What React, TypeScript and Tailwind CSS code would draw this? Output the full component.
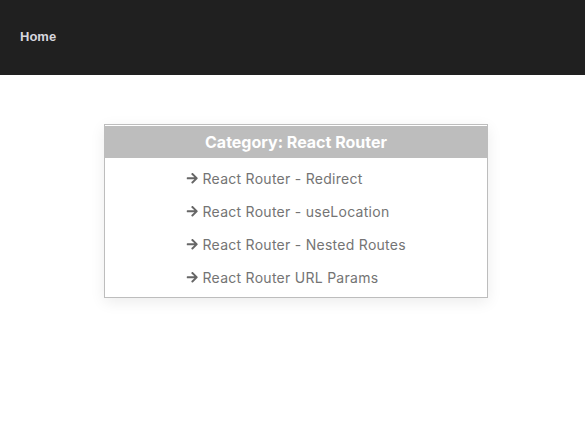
import React from "react";
import { FaArrowRight } from "react-icons/fa";

const items = [
  "React Router - Redirect",
  "React Router - useLocation",
  "React Router - Nested Routes",
  "React Router URL Params",
];

export default function App() {
  return (
    <div className="min-h-[447px] bg-white" style={{ fontFamily: "Inter, 'Noto Sans', sans-serif" }}>
      <nav className="h-[75px] bg-[#202020] flex items-center px-5 pb-[2px]">
        <span className="text-[13px] font-bold text-[#d6d6de]" style={{ fontFamily: "'Liberation Sans', Arial, sans-serif" }}>
          Home
        </span>
      </nav>
      <div className="pt-[49px] pl-[104px]">
        <div className="w-[384px] border border-[#bdbdbd] bg-white shadow-[0_4px_14px_rgba(0,0,0,0.08)] pb-[3px]">
          <div className="mt-px h-[32px] bg-[#bdbdbd] flex items-center justify-center text-white font-bold text-[16px]">
            Category: React Router
          </div>
          <ul className="pt-[4px] pl-[81px]">
            {items.map((t) => (
              <li key={t} className="h-[33px] flex items-center text-[14px] text-[#747474] tracking-[0.27px]">
                <FaArrowRight className="text-[#666666] mr-[4px]" size={12.5} />
                <span>{t}</span>
              </li>
            ))}
          </ul>
        </div>
      </div>
    </div>
  );
}
